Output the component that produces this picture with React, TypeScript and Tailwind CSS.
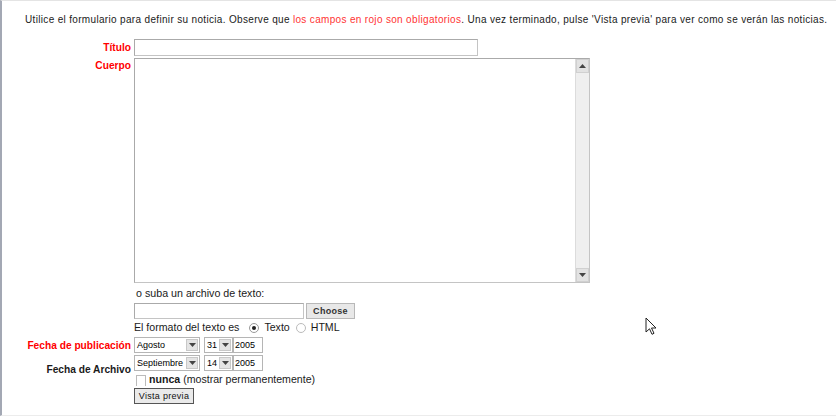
import React from "react";

const font = { fontFamily: '"Liberation Sans", Arial, sans-serif' };

function Arrow({ down = true }: { down?: boolean }) {
  return (
    <svg width="7" height="4" viewBox="0 0 7 4">
      {down ? <path d="M0 0h7L3.5 4z" fill="#444" /> : <path d="M0 4h7L3.5 0z" fill="#444" />}
    </svg>
  );
}

function Select({ value, width }: { value: string; width: string }) {
  return (
    <div className={`${width} h-[16px] flex items-stretch border border-[#b5b5b5] bg-white`}>
      <span className="flex-1 pl-[2px] text-[9px] leading-[14px] text-black overflow-hidden whitespace-nowrap">{value}</span>
      <span className="w-[12px] m-[1px] bg-[#e4e4e4] border border-[#c8c8c8] flex items-center justify-center">
        <Arrow />
      </span>
    </div>
  );
}

function YearBox() {
  return (
    <div className="w-[30px] h-[16px] border border-[#b5b5b5] bg-white text-[9px] leading-[14px] pl-[1px] text-black">2005</div>
  );
}

export default function App() {
  return (
    <div style={font} className="w-[836px] h-[416px] bg-white relative overflow-hidden border-l-2 border-l-[#a3a8b4] border-t border-t-[#e4e4e4] border-b border-b-[#ececec] text-[11px] text-[#222]">
      <div className="pl-[23px] pt-[12px] text-[10px] leading-[13px] text-[#1a1a1a] whitespace-nowrap tracking-[0.33px]">
        Utilice el formulario para definir su noticia. Observe que <span className="text-[#ff3333]">los campos en rojo son obligatorios</span>. Una vez terminado, pulse 'Vista previa' para ver como se verán las noticias.
      </div>
      <div className="mt-[13px] grid grid-cols-[129px_auto] gap-x-[3px] items-start">
        <div className="text-right font-bold text-[10.2px] text-[#f00] pt-[2px] leading-[13px]">Título</div>
        <div className="w-[344px] h-[17px] border border-[#c4c4c4] border-t-[#aaa] border-l-[#aaa] bg-white" />

        <div className="text-right font-bold text-[10.2px] text-[#f00] pt-[1px] leading-[13px] mt-[2px]">Cuerpo</div>
        <div className="mt-[2px] w-[456px] h-[225px] border border-[#c4c4c4] border-t-[#aaa] border-l-[#aaa] bg-white flex justify-end">
          <div className="w-[14px] h-full bg-[#efefef] border-l border-[#dcdcdc] flex flex-col justify-between">
            <div className="h-[14px] bg-[#e2e2e2] border border-[#d0d0d0] flex items-center justify-center"><Arrow down={false} /></div>
            <div className="h-[14px] bg-[#e2e2e2] border border-[#d0d0d0] flex items-center justify-center"><Arrow /></div>
          </div>
        </div>

        <div />
        <div className="pt-[4px] pl-[2px] leading-[13px] text-[10.7px] text-[#1a1a1a]">o suba un archivo de texto:</div>

        <div />
        <div className="mt-[3px] flex gap-[2px] items-center">
          <div className="w-[170px] h-[16px] border border-[#c4c4c4] border-t-[#aaa] border-l-[#aaa] bg-white" />
          <div className="w-[49px] h-[16px] border border-[#b8b8b8] bg-[#e8e8e8] text-[9px] leading-[14px] font-bold text-center text-[#333] tracking-[0.3px]">Choose</div>
        </div>

        <div />
        <div className="mt-[2px] flex items-center leading-[13px] text-[10.6px] text-[#1a1a1a]">
          <span>El formato del texto es</span>
          <span className="ml-[10px] w-[10px] h-[10px] rounded-full border border-[#999] bg-white flex items-center justify-center">
            <span className="w-[4px] h-[4px] rounded-full bg-[#222]" />
          </span>
          <span className="ml-[5px]">Texto</span>
          <span className="ml-[6px] w-[10px] h-[10px] rounded-full border border-[#bbb] bg-white" />
          <span className="ml-[5px]">HTML</span>
        </div>

        <div className="text-right font-bold text-[10.2px] text-[#f00] leading-[13px] mt-[5px]">Fecha de publicación</div>
        <div className="mt-[3px] flex items-center">
          <Select value="Agosto" width="w-[66px]" />
          <div className="w-[4px]" />
          <Select value="31" width="w-[29px]" />
          <YearBox />
        </div>

        <div className="self-center text-right font-bold text-[10.2px] text-[#1a1a1a] leading-[13px]">Fecha de Archivo</div>
        <div className="mt-[2px] flex flex-col">
          <div className="flex items-center">
            <Select value="Septiembre" width="w-[66px]" />
            <div className="w-[4px]" />
            <Select value="14" width="w-[29px]" />
            <YearBox />
          </div>
          <div className="flex items-center mt-[2px] h-[13px] leading-[13px] text-[10.6px] text-[#1a1a1a]">
            <span className="ml-[2px] self-end w-[10px] h-[11px] border border-[#bbb] border-b-0 bg-white" />
            <span className="ml-[3px] font-bold">nunca</span>
            <span className="ml-[3px]">(mostrar permanentemente)</span>
          </div>
        </div>

        <div />
        <div className="mt-[2px] w-[60px] h-[16px] border border-[#555] bg-[#eaeaea] text-[9px] leading-[14px] text-center text-[#111] tracking-[0.3px]">Vista previa</div>
      </div>
      <svg className="absolute left-[643px] top-[316px]" width="14" height="20" viewBox="0 0 14 20">
        <path d="M1 1v14l3.5-3.2 2.5 5.5 2-1-2.5-5.3H11z" fill="white" stroke="#222" strokeWidth="1" />
      </svg>
    </div>
  );
}
